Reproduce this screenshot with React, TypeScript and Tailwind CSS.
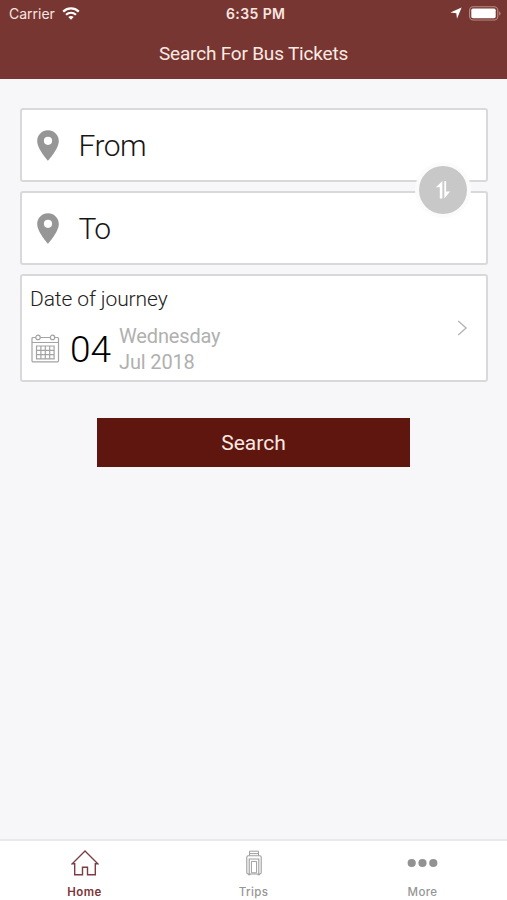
function StatusBar() {
  return (
    <div className="relative flex h-7 items-center justify-between pl-[9px] pr-[6px] font-[Inter,sans-serif] text-[#f9e6e1]">
      <div className="flex items-center gap-[7px]">
        <span className="-mt-px text-[14px]">Carrier</span>
        <svg width="18" height="13" viewBox="0 0 18 13" fill="none" className="-mt-[2px] text-white">
          <path d="M1.2 4.6C5.7.4 12.3.4 16.8 4.6" stroke="currentColor" strokeWidth="2.3" />
          <path d="M4 7.8c2.9-2.6 7.1-2.6 10 0" stroke="currentColor" strokeWidth="2.2" />
          <path d="M6.3 10.1c1.6-1.4 3.8-1.4 5.4 0L9 12.8z" fill="currentColor" />
        </svg>
      </div>
      <span className="absolute left-[226px] -mt-[2px] text-[14px] font-semibold tracking-[0.4px]">6:35 PM</span>
      <div className="-mt-[2px] flex items-center gap-[7px] text-white">
        <svg width="12" height="12" viewBox="0 0 12 12">
          <path d="M11.6.4 7 11.8 6.3 6.2.4 5.5z" fill="currentColor" />
        </svg>
        <svg width="32" height="15" viewBox="0 0 32 15" fill="none">
          <rect x=".6" y=".8" width="28.2" height="13.2" rx="3.6" stroke="#b98a85" strokeWidth="1.1" />
          <rect x="2.3" y="2.6" width="24.4" height="9.6" rx="1.6" fill="currentColor" />
          <path d="M30.2 5.2c1.8.8 1.8 3.6 0 4.4z" fill="#b98a85" />
        </svg>
      </div>
    </div>
  )
}

function PinIcon() {
  return (
    <svg width="22" height="31" viewBox="0 0 22 31" className="text-[#969696]">
      <path
        fill="currentColor"
        fillRule="evenodd"
        d="M11 .3C5 .3.2 5.1.2 11c0 8 10.8 19.8 10.8 19.8S21.8 19 21.8 11C21.8 5.1 17 .3 11 .3zm0 6.4a4.1 4.1 0 1 1 0 8.2 4.1 4.1 0 0 1 0-8.2z"
      />
    </svg>
  )
}

function CalendarIcon() {
  return (
    <svg width="29" height="29" viewBox="0 0 29 29" fill="none" stroke="#a3a3a3" strokeWidth="1.2">
      <path d="M4.8 3.5H2a1 1 0 0 0-1 1v22.3a1 1 0 0 0 1 1h24.5a1 1 0 0 0 1-1V4.5a1 1 0 0 0-1-1h-2.8M9.2 3.5h10.1M1 8.5h26.5" />
      <circle cx="7" cy="3.4" r="2.2" />
      <circle cx="21.5" cy="3.4" r="2.2" />
      <path d="M5.5 12h17.6v12.8H5.5zM5.5 16.3h17.6M5.5 20.6h17.6M9.9 12v12.8M14.3 12v12.8M18.7 12v12.8" />
    </svg>
  )
}

function SwapIcon() {
  return (
    <svg width="16" height="20" viewBox="0 0 16 20" fill="#fff">
      <path d="M7.4 1v17.6H4.8V7.2H1z" />
      <path d="M9.3 1h1.8v10.6h4L9.3 18.4z" />
    </svg>
  )
}

function HomeIcon() {
  return (
    <svg width="28" height="26" viewBox="0 0 28 26" fill="none" stroke="#7c3d40" strokeWidth="1.4">
      <path d="M3.7 13.8H1.2L14 1.1l12.8 12.7h-2.5v11h-7.8v-7.6h-5v7.6H3.7z" />
    </svg>
  )
}

function LuggageIcon() {
  return (
    <svg width="16" height="26" viewBox="0 0 16 26" fill="none" stroke="#9d9d9d">
      <path d="M3.5 5.5V1.2h9v4.3M3.5 3.6h9" strokeWidth="1" />
      <rect x=".8" y="5.8" width="14.4" height="18.2" rx="1.5" strokeWidth="1.1" />
      <path d="M3.2 24V9h9.6v15" strokeWidth="1.1" />
      <path d="M5.4 22.8V11.4h5.2v11.4z" strokeWidth="1" />
      <path d="M2.2 24.6h2.2M11.6 24.6h2.2" strokeWidth="1.2" />
    </svg>
  )
}

function MoreIcon() {
  return (
    <svg width="31" height="10" viewBox="0 0 31 10" fill="#929292">
      <circle cx="4.7" cy="5" r="4.1" />
      <circle cx="15.5" cy="5" r="4.1" />
      <circle cx="26.3" cy="5" r="4.1" />
    </svg>
  )
}

export default function App() {
  const places = ["From", "To"]

  const tabs = [
    { label: "Home", icon: <HomeIcon />, color: "text-[#7c3438] font-semibold" },
    { label: "Trips", icon: <LuggageIcon />, color: "text-[#969696] font-medium" },
    { label: "More", icon: <MoreIcon />, color: "text-[#969696] font-medium" },
  ]

  return (
    <div className="flex h-[900px] w-full flex-col overflow-hidden bg-[#f7f7fa] font-[Roboto,sans-serif]">
      <header className="h-[79px] bg-[#773631]">
        <StatusBar />
        <h1 className="pt-[12px] text-center text-[19px] leading-7 tracking-[-0.19px] text-[#fbe9e3]">
          Search For Bus Tickets
        </h1>
      </header>

      <main className="flex-1 pl-5 pr-[19px] pt-[29px]">
        <div className="relative flex flex-col gap-[9px]">
          {places.map((place) => (
            <div
              key={place}
              className="flex h-[74px] items-center gap-[19px] rounded-[3px] border-2 border-[#d9d9db] bg-white pl-[15.4px]"
            >
              <PinIcon />
              <span className="text-[30px] font-light tracking-[-0.5px] text-[#161616]">{place}</span>
            </div>
          ))}

          {/* Swap button */}
          <button className="absolute right-[17px] top-[54px] flex h-14 w-14 items-center justify-center rounded-full bg-[#fbfbfc]">
            <span className="flex h-12 w-12 items-center justify-center rounded-full bg-[#c8c8c8]">
              <SwapIcon />
            </span>
          </button>
        </div>

        {/* Date of journey */}
        <div className="relative mt-[9px] h-[108px] rounded-[3px] border-2 border-[#d9d9db] bg-white pl-[8px] pt-[9px]">
          <p className="text-[21px] leading-7 font-light tracking-[-0.1px] text-[#222]">Date of journey</p>
          <div className="flex items-center pl-[1px] pt-[8px]">
            <CalendarIcon />
            <span className="ml-[10px] mt-[4px] w-[42px] text-[37px] leading-[50px] font-light text-black">04</span>
            <div className="ml-[7px] mt-px text-[20px] leading-[26px] tracking-[-0.15px] text-[#b0b0b0]">
              <p>Wednesday</p>
              <p>Jul 2018</p>
            </div>
          </div>
          <svg width="11" height="16" viewBox="0 0 11 16" fill="none" className="absolute right-[18px] top-[44px]">
            <path d="m1.2 1 7.9 7-7.9 7" stroke="#b5b5b5" strokeWidth="1.4" />
          </svg>
        </div>

        <button className="ml-[77px] mt-[36px] block h-[49px] w-[313px] bg-[#5f160f] pt-[2px] text-[21px] text-[#fae8e3]">
          Search
        </button>
      </main>

      <nav className="grid h-[61px] grid-cols-3 border-t-2 border-[#e9e9eb] bg-white font-[Inter,sans-serif]">
        {tabs.map((tab) => (
          <div key={tab.label} className="flex flex-col items-center pt-[8px]">
            <div className="flex h-[28px] items-center">{tab.icon}</div>
            <span className={`mt-[7px] text-[11.5px] leading-4 tracking-[0.4px] ${tab.color}`}>{tab.label}</span>
          </div>
        ))}
      </nav>
    </div>
  )
}
